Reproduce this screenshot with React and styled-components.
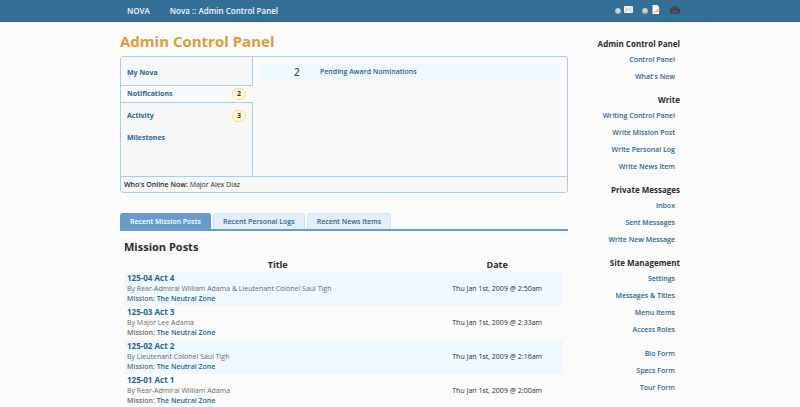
import React from 'react';
import styled, { createGlobalStyle } from 'styled-components';

const GlobalStyle = createGlobalStyle`
  *, *::before, *::after { box-sizing: border-box; }
  body {
    margin: 0;
    background: #fbfbfb;
    color: #2b2b2b;
    font-family: "Open Sans", "Noto Sans", sans-serif;
    font-size: 7px;
    line-height: 10px;
  }
  h1, h2, h3, p, ul { margin: 0; padding: 0; }
  ul { list-style: none; }
  a { color: #2c6596; text-decoration: none; font-weight: 600; }
  strong { font-weight: 600; }
  button { font: inherit; cursor: pointer; }
`;

const Container = styled.div`
  width: 70%;
  margin: 0 auto;
  display: flex;
`;

const TopBar = styled.header`
  background: #346f98;
  border-bottom: 1px solid #285c81;
`;

const TopInner = styled(Container)`
  align-items: center;
  height: 21px;
  padding: 0 0 0 7px;
  font-size: 8px;
`;

const TopLink = styled.a`
  color: #f4f8fb;
  margin-right: ${({ $gap }) => $gap || 0}px;
`;

const TopIcons = styled.nav`
  display: flex;
  align-items: center;
  gap: 9px;
  margin-left: auto;
`;

const IconLink = styled.a`
  display: flex;
  align-items: center;
  gap: ${({ $gap }) => $gap || 3}px;
  height: 18px;
  padding-bottom: 2px;
`;

const StatusDot = styled.span`
  width: 6px;
  height: 6px;
  margin-top: 2px;
  border-radius: 50%;
  background: radial-gradient(circle at 50% 40%, #d2d4d5 25%, #a3a6a8 80%);
`;

const Page = styled(Container)`
  padding-top: 9px;
`;

const Main = styled.main`
  flex: 0 0 80%;
`;

const PageTitle = styled.h1`
  color: #e29a3b;
  font-size: 15px;
  line-height: 20px;
  font-weight: 700;
  margin-bottom: 5px;
`;

const Panel = styled.section`
  border: 1px solid #a5cdf0;
  border-radius: 3px;
  background: #fafafa;
`;

const PanelBody = styled.div`
  display: flex;
  min-height: 119px;
`;

const PanelNav = styled.nav`
  flex: 0 0 132px;
  display: flex;
  flex-direction: column;
`;

const NavGroup = styled.div`
  background: #f7f7f7;
  border-right: 1px solid #a5cdf0;
  flex: ${({ $fill }) => ($fill ? 1 : '0 0 auto')};
  padding-top: ${({ $top }) => $top}px;
  padding-bottom: ${({ $bottom }) => $bottom || 0}px;
`;

const NavButton = styled.button`
  display: flex;
  align-items: center;
  justify-content: space-between;
  width: 100%;
  height: ${({ $active }) => ($active ? 18 : 22)}px;
  padding: 0 ${({ $active }) => ($active ? 7 : 6)}px 0 6px;
  border: 0 solid #a5cdf0;
  border-width: ${({ $active }) => ($active ? '1px 0' : '0')};
  background: transparent;
  color: #2c6596;
  font-weight: 700;
`;

const Count = styled.span`
  width: 14px;
  height: 12px;
  border: 1px solid #f3df7c;
  border-radius: 6px;
  background: #fff9dc;
  color: #333;
  line-height: 10px;
  text-align: center;
`;

const Notices = styled.div`
  flex: 1;
  padding: 7px;
`;

const Notice = styled.div`
  display: flex;
  align-items: center;
  height: 16px;
  background: #f0f8ff;
`;

const NoticeCount = styled.span`
  flex: 0 0 60px;
  padding-left: 34px;
  font-size: 10px;
  font-weight: 600;
  color: #4a4a4a;
`;

const NoticeLink = styled.a`
  color: #22668f;
`;

const Online = styled.p`
  height: 16px;
  padding-left: 3px;
  border-top: 1px solid #a5cdf0;
  background: #f7f7f7;
  border-radius: 0 0 3px 3px;
  line-height: 15px;
`;

const Tabs = styled.div`
  display: flex;
  align-items: flex-end;
  gap: 2px;
  margin-top: 20px;
  border-bottom: 2px solid #669ccc;
`;

const Tab = styled.button`
  height: 16px;
  padding: 0 9px;
  border: 1px solid ${({ $active }) => ($active ? '#669ccc' : '#d3e4f1')};
  border-bottom: 0;
  border-radius: 3px 3px 0 0;
  background: ${({ $active }) => ($active ? '#669ccc' : '#e2effa')};
  color: ${({ $active }) => ($active ? '#fff' : '#2c6596')};
  font-weight: 600;
`;

const TabPanel = styled.section`
  padding: 8px 5px 0 4px;
`;

const SectionTitle = styled.h2`
  font-size: 11px;
  line-height: 16px;
  font-weight: 700;
`;

const PostTable = styled.table`
  width: 100%;
  margin-top: 3px;
  border-collapse: collapse;
  table-layout: fixed;
`;

const HeadCell = styled.th`
  width: ${({ $width }) => $width};
  height: 14px;
  padding: 0;
  font-size: 9px;
  line-height: 12px;
`;

const Row = styled.tr`
  height: 34px;
  background: ${({ $shaded }) => ($shaded ? '#f0f8ff' : 'transparent')};
`;

const Cell = styled.td`
  padding: 0 ${({ $center }) => ($center ? '0' : '3px 2px')};
  text-align: ${({ $center }) => ($center ? 'center' : 'left')};
  vertical-align: middle;
`;

const PostTitle = styled.a`
  display: block;
  color: #22668f;
  font-size: 8px;
  font-weight: 700;
  line-height: 12px;
`;

const Byline = styled.p`
  color: #6a6a6a;
  white-space: nowrap;
`;

const MissionLink = styled.a`
  color: #22668f;
`;

const Sidebar = styled.aside`
  flex: 1;
  padding-top: 5px;
  text-align: right;
`;

const MenuTitle = styled.h3`
  font-size: 8px;
  line-height: 15px;
  font-weight: 700;
`;

const Menu = styled.ul`
  padding: 0 5px 7px 0;
  line-height: 17px;
  white-space: nowrap;
`;

const tabs = ['Recent Mission Posts', 'Recent Personal Logs', 'Recent News Items'];

const posts = [
  ['125-04 Act 4', 'Rear-Admiral William Adama & Lieutenant Colonel Saul Tigh', '2:50am'],
  ['125-03 Act 3', 'Major Lee Adama', '2:33am'],
  ['125-02 Act 2', 'Lieutenant Colonel Saul Tigh', '2:16am'],
  ['125-01 Act 1', 'Rear-Admiral William Adama', '2:00am'],
];

const menus = [
  { title: 'Admin Control Panel', groups: [['Control Panel', "What's New"]] },
  {
    title: 'Write',
    groups: [['Writing Control Panel', 'Write Mission Post', 'Write Personal Log', 'Write News Item']],
  },
  { title: 'Private Messages', groups: [['Inbox', 'Sent Messages', 'Write New Message']] },
  {
    title: 'Site Management',
    groups: [
      ['Settings', 'Messages & Titles', 'Menu Items', 'Access Roles'],
      ['Bio Form', 'Specs Form', 'Tour Form'],
    ],
  },
];

const MailIcon = () => (
  <svg width="9" height="7" viewBox="0 0 9 7" aria-hidden="true">
    <rect width="9" height="7" rx="1" fill="#eef3f4" />
    <path d="M1 1.2 4.5 4.3 8 1.2M1 6l2.3-2.4M8 6 5.7 3.6" fill="none" stroke="#9eb4b8" strokeWidth=".8" />
  </svg>
);

const WriteIcon = () => (
  <svg width="9" height="9" viewBox="0 0 9 9" aria-hidden="true">
    <path d="M.5 0h4.8L7 1.7V9H.5z" fill="#f2f5f8" />
    <path d="M5.3 0v1.7H7" fill="#c3d0da" />
    <path d="M2 7.6 3 5.8 4.6 7.2z" fill="#e9c63f" />
    <path d="m3.4 6.3 3.4-2.8 1.2 1.3-3.4 2.8z" fill="#edbd45" />
    <path d="m6.8 3.5.8-.6 1.2 1.3-.8.6z" fill="#c95b45" />
  </svg>
);

const DashboardIcon = () => (
  <svg width="10" height="8" viewBox="0 0 10 8" aria-hidden="true">
    <path d="M0 6V4.5C.2 2 2 .3 5 .3S9.8 2 10 4.5V6L8.8 7.7H1.2z" fill="#39424b" />
    <path d="M1.5 4.2C1.8 2.4 3 1.6 5 1.6s3.2.8 3.5 2.6" fill="none" stroke="#566069" strokeWidth=".7" />
    <path d="M5 5.2 3.6 3.4" stroke="#a8655f" strokeWidth=".8" />
    <path d="M2 6h6" stroke="#69737b" strokeWidth=".7" />
  </svg>
);

export default function App() {
  return (
    <>
      <GlobalStyle />
      <TopBar>
        <TopInner>
          <TopLink href="#" $gap={20}>NOVA</TopLink>
          <TopLink href="#">Nova :: Admin Control Panel</TopLink>
          <TopIcons>
            <IconLink href="#" aria-label="Messages"><StatusDot /><MailIcon /></IconLink>
            <IconLink href="#" aria-label="Writing" $gap={4}><StatusDot /><WriteIcon /></IconLink>
            <IconLink href="#" aria-label="Dashboard"><DashboardIcon /></IconLink>
          </TopIcons>
        </TopInner>
      </TopBar>
      <Page>
        <Main>
          <PageTitle>Admin Control Panel</PageTitle>
          <Panel>
            <PanelBody>
              <PanelNav>
                <NavGroup $top={5} $bottom={1}><NavButton type="button">My Nova</NavButton></NavGroup>
                <NavButton type="button" $active>Notifications<Count>2</Count></NavButton>
                <NavGroup $top={2} $fill>
                  <NavButton type="button">Activity<Count>3</Count></NavButton>
                  <NavButton type="button">Milestones</NavButton>
                </NavGroup>
              </PanelNav>
              <Notices>
                <Notice>
                  <NoticeCount>2</NoticeCount>
                  <NoticeLink href="#">Pending Award Nominations</NoticeLink>
                </Notice>
              </Notices>
            </PanelBody>
            <Online><strong>Who's Online Now:</strong> Major Alex Diaz</Online>
          </Panel>
          <Tabs role="tablist">
            {tabs.map((label, i) => (
              <Tab key={label} type="button" role="tab" aria-selected={i === 0} $active={i === 0}>{label}</Tab>
            ))}
          </Tabs>
          <TabPanel>
            <SectionTitle>Mission Posts</SectionTitle>
            <PostTable>
              <thead>
                <tr>
                  <HeadCell $width="70%">Title</HeadCell>
                  <HeadCell $width="30%">Date</HeadCell>
                </tr>
              </thead>
              <tbody>
                {posts.map(([title, author, time], i) => (
                  <Row key={title} $shaded={i % 2 === 0}>
                    <Cell>
                      <PostTitle href="#">{title}</PostTitle>
                      <Byline>By {author}</Byline>
                      <Byline><strong>Mission:</strong> <MissionLink href="#">The Neutral Zone</MissionLink></Byline>
                    </Cell>
                    <Cell $center>Thu Jan 1st, 2009 @ {time}</Cell>
                  </Row>
                ))}
              </tbody>
            </PostTable>
          </TabPanel>
        </Main>
        <Sidebar>
          {menus.map(({ title, groups }) => (
            <nav key={title} aria-label={title}>
              <MenuTitle>{title}</MenuTitle>
              {groups.map((items) => (
                <Menu key={items[0]}>
                  {items.map((item) => <li key={item}><a href="#">{item}</a></li>)}
                </Menu>
              ))}
            </nav>
          ))}
        </Sidebar>
      </Page>
    </>
  );
}
